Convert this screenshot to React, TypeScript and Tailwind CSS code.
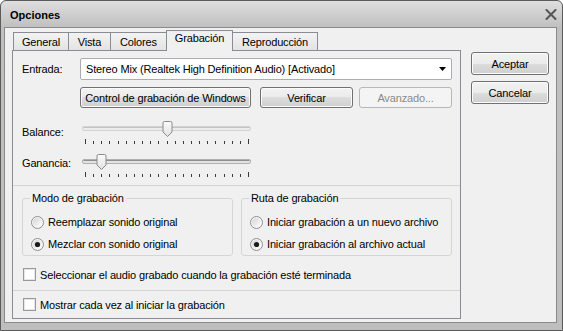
import React from "react";

const Radio = ({ checked }: { checked?: boolean }) => (
  <svg width="13" height="13" viewBox="0 0 13 13" className="shrink-0">
    <defs>
      <linearGradient id="radioG" x1="0" y1="0" x2="1" y2="1">
        <stop offset="0" stopColor="#d4d4d4" />
        <stop offset="1" stopColor="#ffffff" />
      </linearGradient>
    </defs>
    <circle cx="6.5" cy="6.5" r="6" fill="#f6f6f6" stroke="#8e8f8f" />
    <circle cx="6.5" cy="6.5" r="4.5" fill="url(#radioG)" />
    {checked && <circle cx="6.5" cy="6.5" r="2.6" fill="#1a1a1a" />}
  </svg>
);

const Check = () => (
  <div className="w-[13px] h-[13px] shrink-0 border border-[#999999] bg-white shadow-[inset_0_0_0_1px_#e6e6e6]" />
);

const Slider = ({ pos, dark }: { pos: number; dark?: boolean }) => {
  const ticks = Array.from({ length: 21 }, (_, i) => Math.round(5 + i * 8.15));
  const cx = ticks[pos] + 0.5;
  const L = cx - 4.5;
  const R = cx + 4.5;
  return (
    <svg width="172" height="26" viewBox="0 0 172 26" className="shrink-0">
      <defs>
        <linearGradient id="thumbG" x1="0" y1="0" x2="0" y2="1">
          <stop offset="0" stopColor="#fbfbfb" />
          <stop offset="1" stopColor="#e2e2e2" />
        </linearGradient>
      </defs>
      <rect x="2.5" y="6.5" width="168" height="4" rx="1.5" fill={dark ? "#e4e4e4" : "#ececec"} stroke={dark ? "#b0b0b0" : "#d2d2d2"} />
      <line x1="3.5" y1="7.5" x2="169.5" y2="7.5" stroke={dark ? "#8f8f8f" : "#c4c4c4"} />
      {ticks.map((x, i) => {
        const edge = i === 0 || i === 20;
        return <rect key={i} x={x} y={edge ? 19 : 21} width="1" height={edge ? 5 : 3} fill="#3a3a3a" />;
      })}
      <path
        d={`M${L + 1.5},1.5 H${R - 1.5} Q${R},1.5 ${R},3 V12 L${cx},16.5 L${L},12 V3 Q${L},1.5 ${L + 1.5},1.5 Z`}
        fill="url(#thumbG)"
        stroke="#8a8a8a"
      />
    </svg>
  );
};

const Btn = ({ children, className, disabled }: { children: React.ReactNode; className: string; disabled?: boolean }) => (
  <div
    className={
      "flex items-center justify-center rounded-[3px] border " +
      (disabled
        ? "border-[#b5b9bc] bg-[#f4f4f4] text-[#8a8a8a] "
        : "border-[#707070] bg-[linear-gradient(#f2f2f2_0%,#ebebeb_50%,#dddddd_50%,#cfcfcf_100%)] shadow-[inset_0_0_0_1px_#fbfbfb] text-black ") +
      className
    }
  >
    {children}
  </div>
);

const Tab = ({ children, w, selected, first }: { children: React.ReactNode; w: string; selected?: boolean; first?: boolean }) =>
  selected ? (
    <div className={`relative z-10 -ml-px mb-[-1px] h-[21px] ${w} border border-b-0 border-[#898c95] bg-[#f0f0f0] flex justify-center items-start`}>
      {children}
    </div>
  ) : (
    <div
      className={`${first ? "" : "-ml-px"} h-[18px] ${w} border border-b-0 border-[#898c95] bg-[linear-gradient(#f3f3f3,#e3e3e3)] flex justify-center items-center`}
    >
      {children}
    </div>
  );

export default function App() {
  return (
    <div className="w-[563px] h-[331px] border border-[#5b5b5b] rounded-t-[6px] flex flex-col bg-[linear-gradient(#dedede_0px,#c0c0c0_26px,#bebebe_100%)] font-['Liberation_Sans',Arial,sans-serif] text-[11px] leading-[14px] text-black overflow-hidden">
      {/* title bar */}
      <div className="h-[26px] shrink-0 flex items-start justify-between pl-[9px] pr-[5px]">
        <span className="mt-[7px] font-bold">Opciones</span>
        <svg width="12" height="11" viewBox="0 0 12 11" className="mt-[8px]">
          <path d="M1.5 1 L10.5 10 M10.5 1 L1.5 10" stroke="#555555" strokeWidth="2" strokeLinecap="round" />
        </svg>
      </div>

      {/* client area */}
      <div className="h-[296px] shrink-0 ml-[3px] w-[553px] border border-[#8a8a8a] bg-[#f0f0f0] flex pl-[7px] pr-[6px] pt-[2px] tracking-[-0.15px]">
        <div className="w-[449px] flex flex-col">
          <div className="flex items-end h-[20px] pl-[1px]">
            <Tab w="w-[56px]" first>General</Tab>
            <Tab w="w-[43px]">Vista</Tab>
            <Tab w="w-[57px]">Colores</Tab>
            <Tab w="w-[67px]" selected>Grabación</Tab>
            <Tab w="w-[86px]">Reproducción</Tab>
          </div>

          <div className="h-[269px] border border-[#898c95] bg-[#f0f0f0] flex flex-col">
            <div className="pl-[9px] pt-[7px] flex flex-col">
              <div className="flex items-center h-[22px]">
                <span className="w-[58px]">Entrada:</span>
                <div className="w-[372px] h-[22px] border border-[#abadb3] rounded-[2px] bg-white flex items-center justify-between pl-[5px] pr-[5px]">
                  <span>Stereo Mix (Realtek High Definition Audio) [Activado]</span>
                  <svg width="7" height="4" viewBox="0 0 7 4">
                    <path d="M0 0 H7 L3.5 4 Z" fill="#000" />
                  </svg>
                </div>
              </div>
              <div className="flex mt-[7px] pl-[58px]">
                <Btn className="w-[171px] h-[21px]">Control de grabación de Windows</Btn>
                <Btn className="w-[93px] h-[21px] ml-[9px]">Verificar</Btn>
                <Btn className="w-[93px] h-[21px] ml-[6px]" disabled>
                  Avanzado...
                </Btn>
              </div>
              <div className="flex mt-[12px] h-[26px]">
                <span className="w-[58px] mt-[5px]">Balance:</span>
                <Slider pos={10} />
              </div>
              <div className="flex mt-[7px] h-[26px]">
                <span className="w-[58px] mt-[3px]">Ganancia:</span>
                <Slider pos={2} dark />
              </div>
            </div>

            <div className="mt-[6px] h-px bg-[#d5d5d5]" />

            <div className="flex pl-[9px] mt-[5px]">
              <fieldset className="w-[211px] h-[65px] border border-[#d5d5d5] rounded-[3px]">
                <legend className="ml-[7px] px-[2px] leading-[14px]">Modo de grabación</legend>
                <div className="flex flex-col gap-[6px] pt-[9px] pl-[8px]">
                  <div className="flex items-center gap-[4px] h-[16px]">
                    <Radio />
                    <span>Reemplazar sonido original</span>
                  </div>
                  <div className="flex items-center gap-[4px] h-[16px]">
                    <Radio checked />
                    <span>Mezclar con sonido original</span>
                  </div>
                </div>
              </fieldset>
              <fieldset className="ml-[8px] w-[211px] h-[65px] border border-[#d5d5d5] rounded-[3px]">
                <legend className="ml-[7px] px-[2px] leading-[14px]">Ruta de grabación</legend>
                <div className="flex flex-col gap-[6px] pt-[9px] pl-[8px]">
                  <div className="flex items-center gap-[4px] h-[16px]">
                    <Radio />
                    <span>Iniciar grabación a un nuevo archivo</span>
                  </div>
                  <div className="flex items-center gap-[4px] h-[16px]">
                    <Radio checked />
                    <span>Iniciar grabación al archivo actual</span>
                  </div>
                </div>
              </fieldset>
            </div>

            <div className="flex items-center gap-[4px] pl-[10px] mt-[12px] h-[13px]">
              <Check />
              <span>Seleccionar el audio grabado cuando la grabación esté terminada</span>
            </div>

            <div className="mt-[9px] h-px bg-[#d5d5d5]" />

            <div className="flex items-center gap-[4px] pl-[10px] mt-[7px] h-[13px]">
              <Check />
              <span>Mostrar cada vez al iniciar la grabación</span>
            </div>
          </div>
        </div>

        <div className="ml-[10px] mt-[22px] flex flex-col gap-[6px]">
          <Btn className="w-[78px] h-[23px]">Aceptar</Btn>
          <Btn className="w-[78px] h-[23px]">Cancelar</Btn>
        </div>
      </div>
    </div>
  );
}
